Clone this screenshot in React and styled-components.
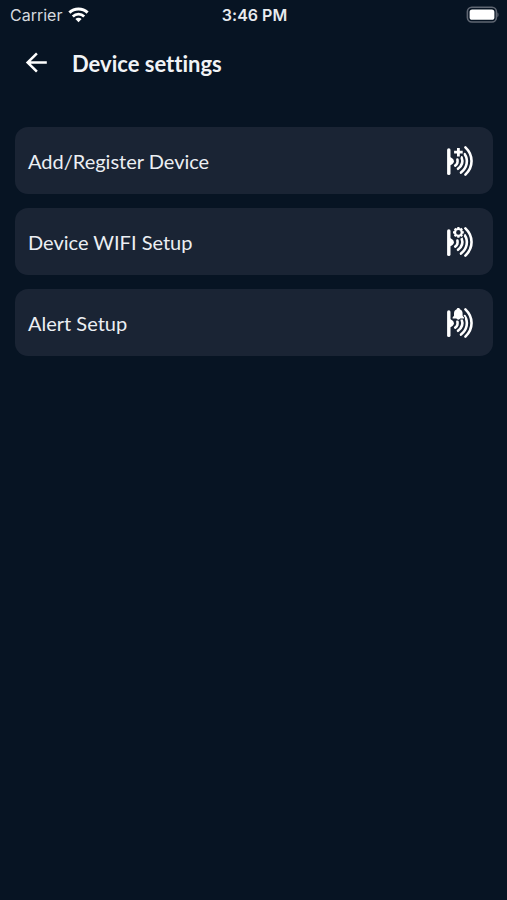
import React from "react";
import styled, { createGlobalStyle } from "styled-components";

const GlobalStyle = createGlobalStyle`
  * {
    box-sizing: border-box;
  }
  body {
    margin: 0;
    background-color: #071423;
  }
`;

const Screen = styled.div`
  min-height: 100vh;
  color: #f1f3f6;
  font-family: Lato, sans-serif;
  font-variant-ligatures: none;
`;

const StatusBar = styled.div`
  display: grid;
  grid-template-columns: 1fr auto 1fr;
  align-items: center;
  height: 30px;
  padding: 0 8px 0 10px;
  font-family: Inter, sans-serif;
  font-size: 16px;
  line-height: 20px;
`;

const Carrier = styled.div`
  display: flex;
  align-items: center;
  gap: 6px;
  color: #d5d9df;
`;

const Clock = styled.time`
  font-weight: 600;
  color: #e8ebef;
`;

const Battery = styled.svg`
  justify-self: end;
`;

const Header = styled.header`
  display: flex;
  align-items: center;
  gap: 24px;
  height: 68px;
  padding: 0 24px;
`;

const BackButton = styled.button`
  display: flex;
  padding: 0;
  border: 0;
  background: none;
  color: #ffffff;
  cursor: pointer;
`;

const Title = styled.h1`
  margin: 0;
  font-size: 22px;
  line-height: 28px;
  font-weight: 700;
`;

const Menu = styled.nav`
  display: flex;
  flex-direction: column;
  gap: 14px;
  padding: 29px 14px 0 15px;
`;

const MenuItem = styled.button`
  display: flex;
  align-items: center;
  justify-content: space-between;
  width: 100%;
  height: 67px;
  padding: 0 18px 0 13px;
  border: 0;
  border-radius: 13px;
  background-color: #1a2434;
  color: #eceff3;
  font-family: inherit;
  font-size: 20px;
  line-height: 28px;
  text-align: left;
  cursor: pointer;
`;

const WifiIcon = () => (
  <svg width="21" height="16" viewBox="0 0 21 16" fill="none" aria-hidden="true">
    <path d="M1.4 5.6a13 13 0 0 1 18.2 0" stroke="#fff" strokeWidth="3" />
    <path d="M4.8 9.4a8.2 8.2 0 0 1 11.4 0" stroke="#fff" strokeWidth="2.8" />
    <path d="M7.4 12.1a4.4 4.4 0 0 1 6.2 0L10.5 15.3z" fill="#fff" />
  </svg>
);

const BatteryIcon = () => (
  <Battery width="33" height="18" viewBox="0 0 33 18" role="img" aria-label="Battery full">
    <rect x="1.4" y="1.2" width="29" height="14.8" rx="4.4" fill="none" stroke="#5f6672" strokeWidth="1.6" />
    <rect x="3.6" y="3.4" width="24.8" height="10.4" rx="2.6" fill="#fff" />
    <path d="M31.4 6.4c1.5.5 1.5 4.1 0 4.6z" fill="#5f6672" />
  </Battery>
);

const ArrowIcon = () => (
  <svg width="24" height="24" viewBox="0 0 24 24" fill="none" aria-hidden="true">
    <path d="M22.8 10.5H3.8M12.9 1.3l-9.3 9.2 9.3 9.2" stroke="currentColor" strokeWidth="2.5" />
  </svg>
);

// what sits on top of the sensor waves
const PlusMark = () => (
  <>
    <path d="M13.4 3v10.6M8.2 8.2h10.4" stroke="#1a2434" strokeWidth="5" />
    <path d="M13.4 3.9v8.6M9.1 8.2h8.6" stroke="#fff" strokeWidth="2.8" />
  </>
);

const GearMark = () => (
  <>
    <circle cx="13.4" cy="7.4" r="6.4" fill="#1a2434" />
    <g stroke="#fff">
      <circle cx="13.4" cy="7.4" r="3.4" strokeWidth="2.2" />
      <path
        d="M13.4 2v2M13.4 10.8v2M8 7.4h2M16.8 7.4h2M9.6 3.6L11 5M15.8 9.8l1.4 1.4M9.6 11.2L11 9.8M15.8 5l1.4-1.4"
        strokeWidth="2.2"
      />
    </g>
  </>
);

const BellMark = () => (
  <path
    d="M13.3 2c.9 0 1.5.5 1.6 1.2 1.8.6 2.7 2.2 2.7 4.2v2.3l1.4 1.9v1h-3.9c-.3.7-1 1.1-1.8 1.1s-1.5-.4-1.8-1.1H7.6v-1L9 9.7V7.4c0-2 .9-3.6 2.7-4.2.1-.7.7-1.2 1.6-1.2z"
    fill="#fff"
    stroke="#1a2434"
    strokeWidth="1.6"
    paintOrder="stroke"
  />
);

const SensorIcon = ({ children }) => (
  <svg width="30" height="34" viewBox="0 0 30 34" fill="none" aria-hidden="true">
    <path d="M3.8 6v23.4" stroke="#fff" strokeWidth="3.4" strokeLinecap="round" />
    <path d="M4.5 12.8c2.8 1.2 4.4 2.4 4.4 4.4s-1.6 3.2-4.4 4.4z" fill="#fff" />
    <g stroke="#fff" strokeWidth="2.6" strokeLinecap="round">
      <path d="M20.4 3.4c8.2 7.8 8.2 19.4 0 27.2" />
      <path d="M19.6 10c4.2 6.2 2.4 13.8-3.6 18.6" />
      <path d="M16.6 13.4c1.6 4.2.1 8.6-3.6 11.4" />
      <path d="M12.4 15.6c.6 2.4-.2 4.6-2.2 6" />
    </g>
    {children}
  </svg>
);

const items = [
  { label: "Add/Register Device", Mark: PlusMark },
  { label: "Device WIFI Setup", Mark: GearMark },
  { label: "Alert Setup", Mark: BellMark },
];

const App = () => (
  <>
    <GlobalStyle />
    <Screen>
      <StatusBar>
        <Carrier>
          Carrier
          <WifiIcon />
        </Carrier>
        <Clock>3:46 PM</Clock>
        <BatteryIcon />
      </StatusBar>
      <Header>
        <BackButton type="button" aria-label="Back">
          <ArrowIcon />
        </BackButton>
        <Title>Device settings</Title>
      </Header>
      <Menu>
        {items.map(({ label, Mark }) => (
          <MenuItem key={label} type="button">
            {label}
            <SensorIcon>
              <Mark />
            </SensorIcon>
          </MenuItem>
        ))}
      </Menu>
    </Screen>
  </>
);

export default App;
